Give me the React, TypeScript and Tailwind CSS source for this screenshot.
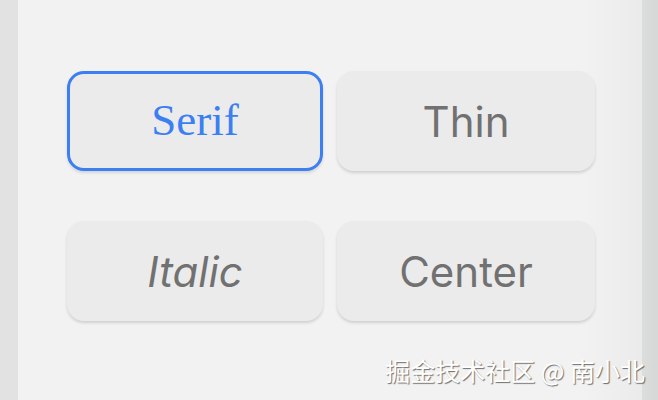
import React from "react";

export default function App() {
  const sans = { fontFamily: "Inter, 'Noto Sans', sans-serif" };
  return (
    <div className="flex h-[400px] w-[658px] overflow-hidden bg-[#e3e3e3]">
      <div className="w-[18px] shrink-0 bg-[#e2e2e2]" />
      <div className="relative flex-1 bg-[#f2f2f2]">
        <div className="absolute right-0 top-0 h-full w-[60px] bg-gradient-to-r from-[#f2f2f2] to-[#ebebeb]" />
        <div className="relative grid grid-cols-[256px_258px] gap-x-[14px] gap-y-[50px] pl-[49px] pt-[71px]">
          <button
            className="flex h-[100px] items-center justify-center rounded-[17px] border-[3px] border-[#3b7ff2] bg-[#ebebeb] text-[45px] text-[#3b7ff2] shadow-[0_2px_3px_rgba(0,0,0,0.12)]"
            style={{ fontFamily: "Georgia, 'Liberation Serif', serif" }}
          >
            Serif
          </button>
          <button
            className="flex h-[100px] items-center justify-center rounded-[17px] bg-[#ebebeb] text-[42px] text-[#717171] shadow-[0_2px_3px_rgba(0,0,0,0.14)]"
            style={sans}
          >
            Thin
          </button>
          <button
            className="flex h-[100px] items-center justify-center rounded-[17px] bg-[#ebebeb] text-[42px] italic text-[#717171] shadow-[0_2px_3px_rgba(0,0,0,0.14)]"
            style={sans}
          >
            Italic
          </button>
          <button
            className="flex h-[100px] items-center justify-center rounded-[17px] bg-[#ebebeb] text-[42px] text-[#717171] shadow-[0_2px_3px_rgba(0,0,0,0.14)]"
            style={sans}
          >
            Center
          </button>
        </div>
        <div
          className="absolute right-[-3px] top-[352px] text-[25px] text-white [text-shadow:1px_1px_1px_rgba(0,0,0,0.55)]"
          style={{ fontFamily: "'Noto Sans CJK SC', sans-serif" }}
        >
          掘金技术社区 @ 南小北
        </div>
      </div>
      <div className="w-[16px] shrink-0 bg-gradient-to-r from-[#dcdddd] to-[#d6d8d8]" />
    </div>
  );
}
